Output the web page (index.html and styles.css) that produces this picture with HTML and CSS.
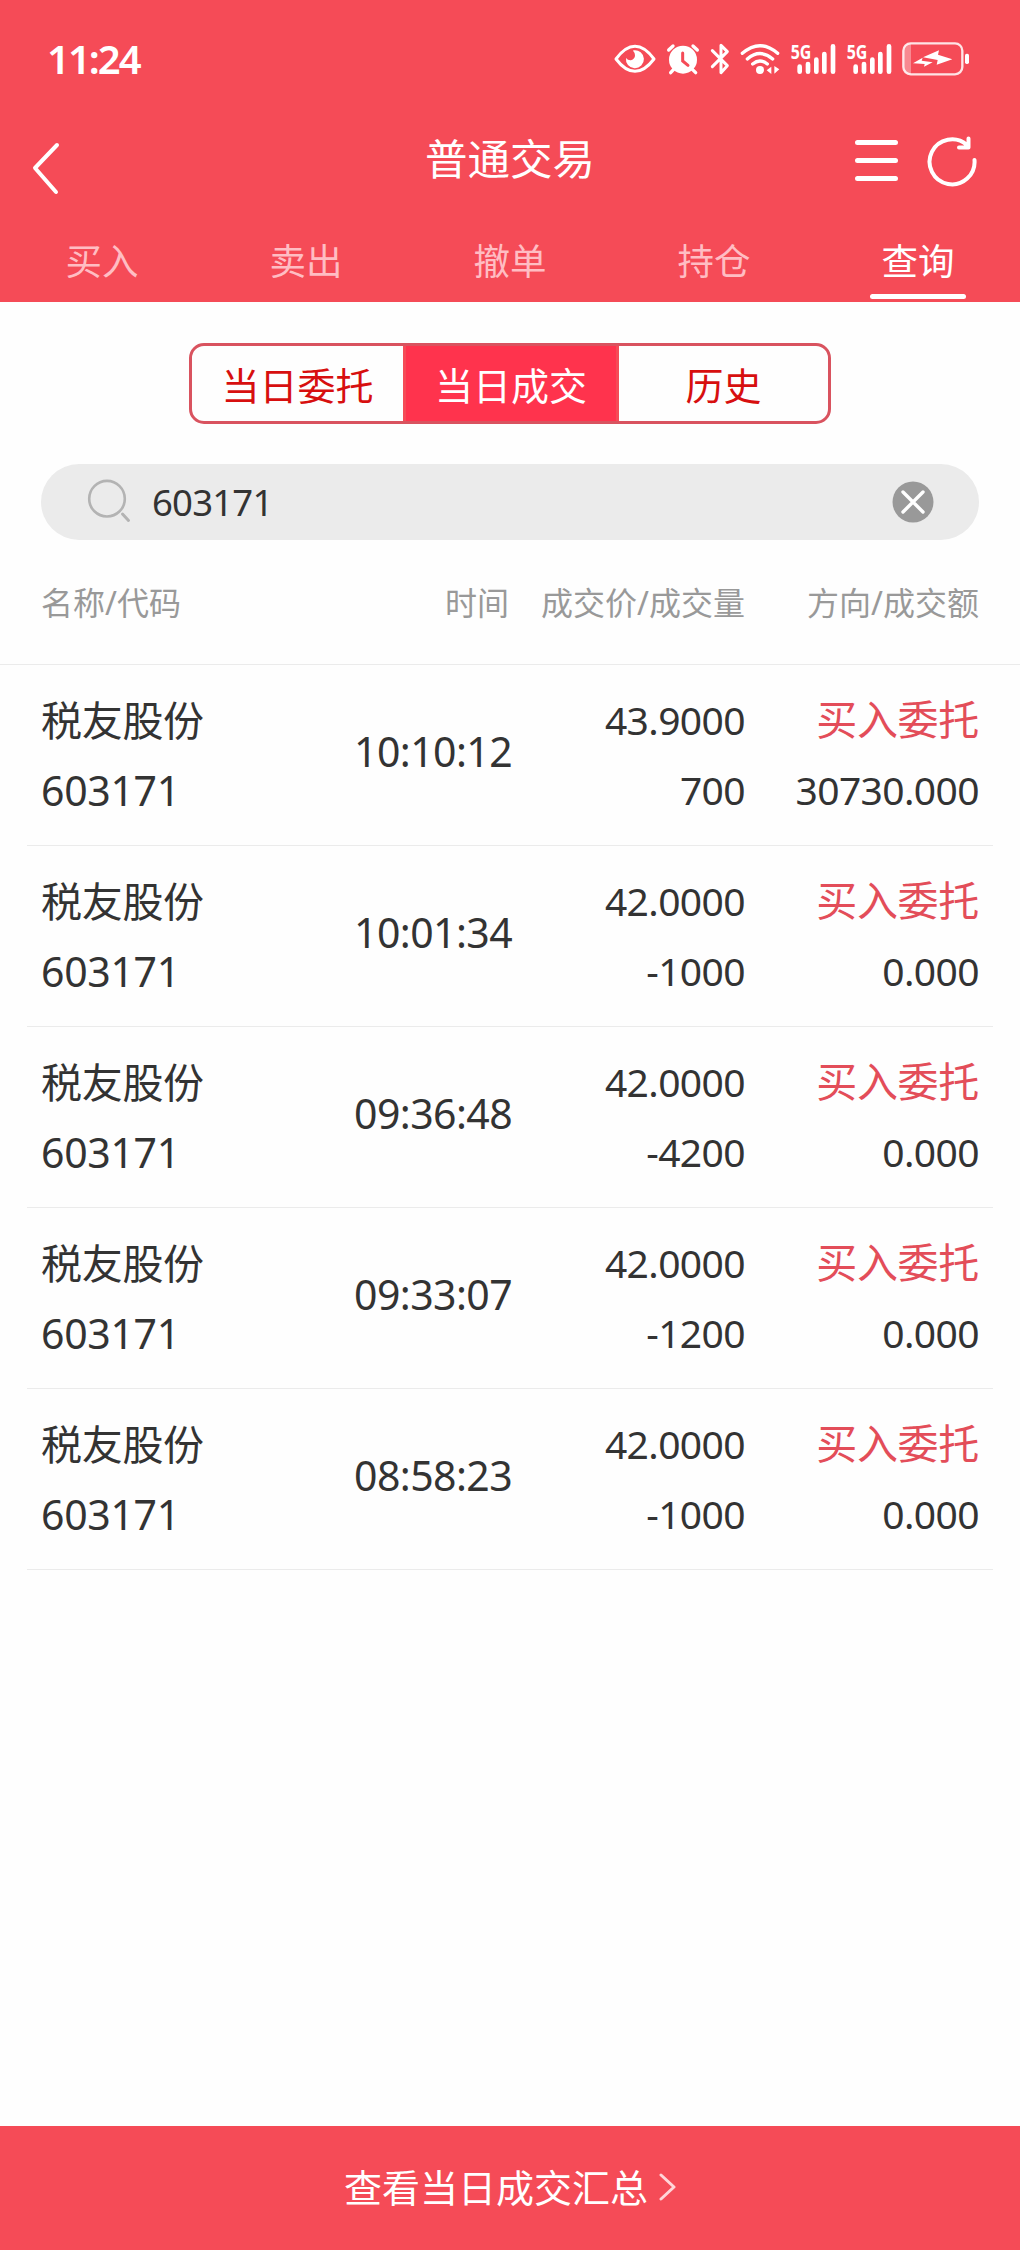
FILE: index.html
```html
<!DOCTYPE html>
<html lang="zh-CN">
<head>
    <meta charset="UTF-8">
    <title>普通交易</title>
    <link rel="stylesheet" href="styles.css">
</head>
<body>
    <header class="header">
        <div class="status">
            <span class="clock">11:24</span>
            <div class="status-icons">
                <!-- eye -->
                <svg width="42" height="36" viewBox="42 33 126 108" fill="none" stroke="#fff">
                    <path d="M48 87Q76 49 105 49Q134 49 162 87Q134 124 105 124Q76 124 48 87Z" stroke-width="9" stroke-linejoin="round"/>
                    <path d="M101 61A27 27 0 1 1 78 84Q84 92 93 91Q105 87 105 76Q105 68 99 62Z" fill="#fff" stroke="none"/>
                </svg>
                <!-- alarm -->
                <svg width="34" height="36" viewBox="198 33 102 108" fill="none" stroke="#fff" stroke-linecap="round">
                    <circle cx="249" cy="89" r="42" fill="#fff" stroke="none"/>
                    <path d="M206 60L219 48M292 60L279 48M221 118L212 128M277 118L287 128" stroke-width="10"/>
                    <path d="M248 69V93L264 106" stroke="#f54b57" stroke-width="9"/>
                </svg>
                <!-- bluetooth -->
                <svg width="20" height="36" viewBox="330 33 60 108" fill="none" stroke="#fff" stroke-width="9" stroke-linejoin="round" stroke-linecap="round">
                    <path d="M337 62L382 107L363 128V46L382 65L337 110"/>
                </svg>
                <!-- wifi -->
                <svg width="40" height="36" viewBox="420 33 120 108" fill="none" stroke="#fff" stroke-width="10" stroke-linecap="round">
                    <path d="M427 70Q480 24 533 70M442 87Q480 54 518 87M458 102Q480 84 502 102"/>
                    <circle cx="480" cy="120" r="12" fill="#fff" stroke="none"/>
                    <path d="M514 110V132L500 121ZM523 108V131L538 118Z" fill="#fff" stroke="none"/>
                </svg>
                <!-- signal -->
                <svg class="signal" width="46" height="46" viewBox="570 3 138 138">
                    <text x="572" y="86" textLength="62" lengthAdjust="spacingAndGlyphs">5G</text>
                    <path d="M599 110V125M624 102V125M649 89V125M673 72V125M699 49V125"/>
                </svg>
                <svg class="signal" width="46" height="46" viewBox="570 3 138 138">
                    <text x="572" y="86" textLength="62" lengthAdjust="spacingAndGlyphs">5G</text>
                    <path d="M599 110V125M624 102V125M649 89V125M673 72V125M699 49V125"/>
                </svg>
                <!-- battery -->
                <svg width="68" height="36" viewBox="906 33 204 108" fill="none">
                    <path d="M933 41H929Q911 41 911 60V113Q911 132 929 132H933Z" fill="#fff" opacity=".35"/>
                    <rect x="910" y="40" width="177" height="93" rx="22" stroke="#fff" stroke-width="7" opacity=".85"/>
                    <rect x="1095" y="71" width="12" height="31" rx="5" fill="#fff"/>
                    <path d="M939 100L968 83L965 92L998 97L972 110L974 102Z M969 82L1017 61L1014 74L1057 88L1010 104L1013 90Z" fill="#fff"/>
                </svg>
            </div>
        </div>
        <div class="nav">
            <svg class="back" width="30" height="54" viewBox="0 0 30 54">
                <path d="M26 4L4 27L25 51"/>
            </svg>
            <h1 class="title">普通交易</h1>
            <div class="nav-icons">
                <svg width="43" height="54" viewBox="0 0 43 54">
                    <path d="M2.5 9.5H40.5M2.5 27.5H40.5M2.5 45.5H40.5" stroke-width="5"/>
                </svg>
                <svg width="52" height="54" viewBox="0 0 52 54">
                    <path d="M48.5 27A22.5 22.5 0 1 1 41 12M42.5 5.5V14.5H33"/>
                </svg>
            </div>
        </div>
        <nav class="tabs">
            <span class="tab">买入</span>
            <span class="tab">卖出</span>
            <span class="tab">撤单</span>
            <span class="tab">持仓</span>
            <span class="tab active">查询</span>
        </nav>
    </header>

    <main class="main">
        <div class="segment">
            <span class="seg">当日委托</span>
            <span class="seg selected">当日成交</span>
            <span class="seg">历史</span>
        </div>

        <div class="search">
            <svg width="48" height="48" viewBox="0 0 48 48" fill="none" stroke="#b3b3b3">
                <circle cx="20" cy="20.7" r="17.8" stroke-width="2.6"/>
                <path d="M35.5 36L41.5 42.5" stroke-width="3" stroke-linecap="round"/>
            </svg>
            <span class="keyword">603171</span>
            <svg class="clear" width="42" height="42" viewBox="0 0 42 42">
                <circle cx="21" cy="21" r="20.5" fill="#999"/>
                <path d="M11 11L31 31M31 11L11 31" stroke="#fff" stroke-width="3.4" stroke-linecap="round"/>
            </svg>
        </div>

        <div class="thead">
            <span>名称/代码</span>
            <span>时间</span>
            <span>成交价/成交量</span>
            <span>方向/成交额</span>
        </div>

        <div class="list">
            <div class="row">
                <div class="name">税友股份<br>603171</div>
                <div class="time">10:10:12</div>
                <div class="num">43.9000<br>700</div>
                <div class="num"><span class="buy">买入委托</span><br>30730.000</div>
            </div>
            <div class="row">
                <div class="name">税友股份<br>603171</div>
                <div class="time">10:01:34</div>
                <div class="num">42.0000<br>-1000</div>
                <div class="num"><span class="buy">买入委托</span><br>0.000</div>
            </div>
            <div class="row">
                <div class="name">税友股份<br>603171</div>
                <div class="time">09:36:48</div>
                <div class="num">42.0000<br>-4200</div>
                <div class="num"><span class="buy">买入委托</span><br>0.000</div>
            </div>
            <div class="row">
                <div class="name">税友股份<br>603171</div>
                <div class="time">09:33:07</div>
                <div class="num">42.0000<br>-1200</div>
                <div class="num"><span class="buy">买入委托</span><br>0.000</div>
            </div>
            <div class="row">
                <div class="name">税友股份<br>603171</div>
                <div class="time">08:58:23</div>
                <div class="num">42.0000<br>-1000</div>
                <div class="num"><span class="buy">买入委托</span><br>0.000</div>
            </div>
        </div>
    </main>

    <footer class="footer">
        <span>查看当日成交汇总</span>
        <svg width="18" height="28" viewBox="0 0 18 28">
            <path d="M3 2L16 14L3 26"/>
        </svg>
    </footer>
</body>
</html>
```
FILE: styles.css
```css
* {
    box-sizing: border-box;
}
body {
    margin: 0;
    min-height: 2250px;
    display: flex;
    flex-direction: column;
    background: #fefefe;
    color: #333;
    font-family: "Noto Sans", "Noto Sans CJK SC", sans-serif;
}
svg {
    display: block;
    flex: none;
}

/* header */
.header {
    height: 302px;
    background: #f54b57;
    color: #fff;
}
.status {
    display: flex;
    justify-content: space-between;
    height: 118px;
    padding: 41px 50px 0 47px;
}
.clock {
    font-size: 40px;
    font-weight: 600;
    line-height: 36px;
    letter-spacing: -2px;
}
.status-icons {
    display: flex;
    align-items: flex-start;
    gap: 10px;
}
.signal {
    margin-top: -10px;
    overflow: visible;
}
.signal path {
    stroke: #fff;
    stroke-width: 14;
    stroke-linecap: round;
}
.signal text {
    fill: #fff;
    font-size: 59px;
    font-weight: 700;
}
.nav {
    display: grid;
    grid-template-columns: 200px 1fr 200px;
    height: 102px;
    padding: 15px 42px 0 31px;
}
.nav svg {
    fill: none;
    stroke: #fff;
    stroke-width: 4;
    stroke-linecap: round;
    stroke-linejoin: round;
}
.back {
    margin-top: 8px;
}
.title {
    margin: 0;
    padding-left: 11px;
    text-align: center;
    font-size: 42.5px;
    font-weight: 400;
    line-height: 51px;
}
.nav-icons {
    display: flex;
    justify-content: flex-end;
    gap: 28px;
}
.tabs {
    display: flex;
    height: 82px;
}
.tab {
    flex: 1;
    display: flex;
    flex-direction: column;
    align-items: center;
    color: #ffbdc3;
    font-size: 36.5px;
    line-height: 83px;
}
.tab.active {
    color: #fff;
}
.tab.active::after {
    content: "";
    width: 96px;
    height: 5px;
    margin-top: -9px;
    border-radius: 3px;
    background: #fff;
}

/* content */
.main {
    flex: 1;
}
.segment {
    display: grid;
    grid-template-columns: 211px 216px 1fr;
    width: 642px;
    height: 81px;
    margin: 41px auto 0;
    border: 3px solid #d9535f;
    border-radius: 15px;
    overflow: hidden;
}
.seg {
    text-align: center;
    color: #d70f0f;
    font-size: 38px;
    line-height: 79px;
}
.seg.selected {
    background: #ff334d;
    border: solid #f54b57;
    border-width: 0 3px;
    color: #fff;
}
.search {
    display: flex;
    align-items: center;
    height: 76px;
    margin: 40px 41px 0;
    padding: 0 45px 0 46px;
    border-radius: 38px;
    background: #ebebeb;
}
.keyword {
    flex: 1;
    padding-left: 17px;
    font-size: 36.5px;
    letter-spacing: -.8px;
    line-height: 74px;
}
.thead,
.row {
    display: grid;
    text-align: right;
}
.thead {
    grid-template-columns: 200px 268px 236px 234px;
    height: 125px;
    padding: 0 41px;
    border-bottom: 1px solid #ebebeb;
    color: #999;
    font-size: 32px;
    line-height: 126px;
    white-space: nowrap;
}
.thead span:first-child,
.name {
    text-align: left;
}
.row {
    grid-template-columns: 200px 271px 233px 234px;
    height: 181px;
    margin: 0 27px;
    padding: 20px 14px 0;
    border-bottom: 1px solid #ebebeb;
    line-height: 70px;
}
.name,
.time {
    font-size: 41px;
    letter-spacing: -.3px;
}
.time {
    letter-spacing: -.6px;
    line-height: 132px;
}
.num {
    font-size: 39px;
    letter-spacing: -.6px;
}
.buy {
    color: #e34d59;
    font-size: 41px;
    letter-spacing: -.3px;
    line-height: 0;
}

/* bottom bar */
.footer {
    display: flex;
    justify-content: center;
    align-items: center;
    gap: 10px;
    height: 124px;
    padding-bottom: 3px;
    background: #f54b57;
    color: #fff;
    font-size: 38px;
    line-height: 50px;
}
.footer path {
    fill: none;
    stroke: #ffd5d8;
    stroke-width: 3;
    stroke-linecap: round;
    stroke-linejoin: round;
}
```
